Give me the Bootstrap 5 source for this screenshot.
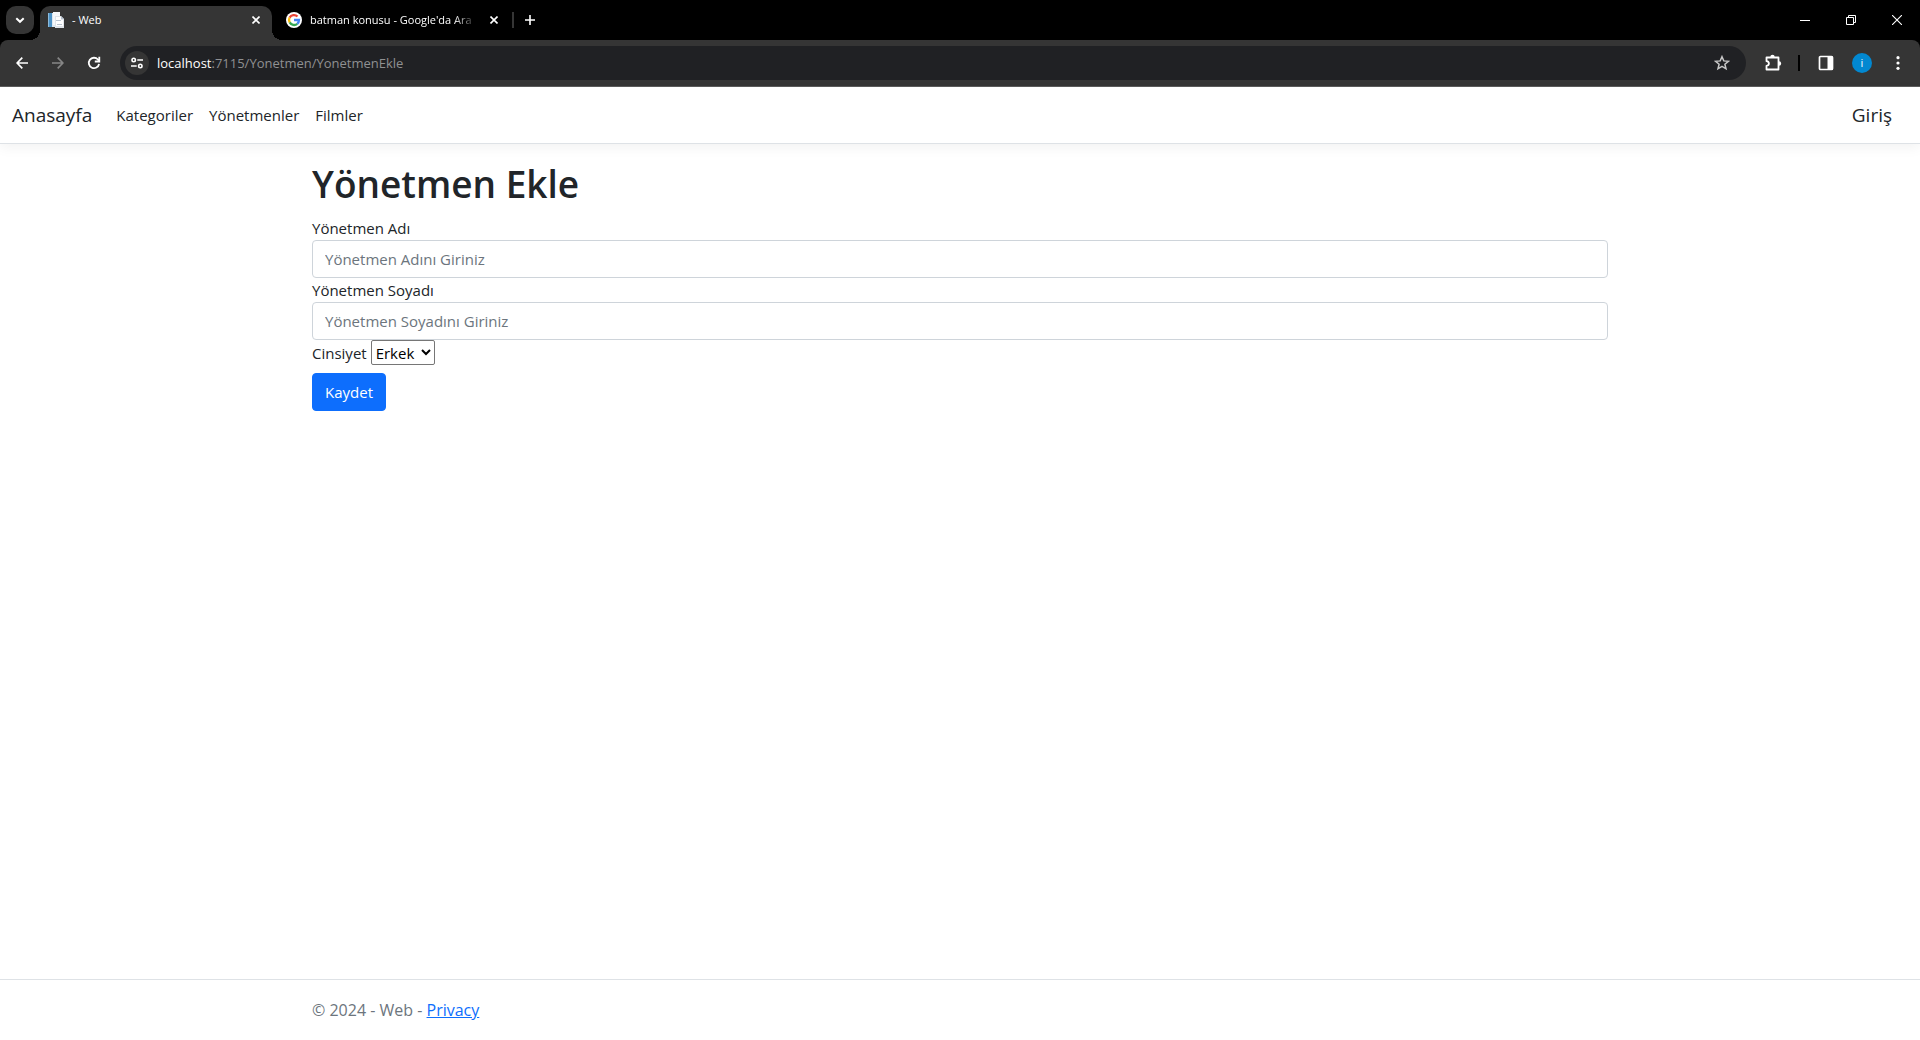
<!DOCTYPE html>
<html lang="tr">
<head>
<meta charset="utf-8">
<meta name="viewport" content="width=device-width, initial-scale=1">
<title>- Web</title>
<link rel="stylesheet" href="https://cdn.jsdelivr.net/npm/bootstrap@5.3.0/dist/css/bootstrap.min.css">
<style>
  body { font-family: "Open Sans", "Noto Sans", sans-serif; font-size: 15px; line-height: 24px; }
  svg { display: block; flex: none; }

  /* Browser window */
  .chrome-btn { background: none; border: 0; padding: 0; color: #fff; display: flex; align-items: center; justify-content: center; flex: none; }
  .tab-strip { height: 40px; background: #000; }
  .tab-search { width: 28px; height: 28px; margin: 6px; border-radius: 10px; background: #353535; }
  .browser-tab { width: 232px; height: 34px; padding: 0 8px 6px; color: #fff; font-size: 11px; position: relative; }
  .browser-tab + .browser-tab { margin-left: 6px; }
  .browser-tab a { color: inherit; text-decoration: none; overflow: hidden; white-space: nowrap; }
  .browser-tab.current { background: #353535; border-radius: 10px 10px 0 0; }
  .browser-tab.current::before, .browser-tab.current::after { content: ""; position: absolute; bottom: 0; width: 10px; height: 10px; }
  .browser-tab.current::before { right: 100%; background: radial-gradient(circle at 0 0, transparent 10px, #353535 10px); }
  .browser-tab.current::after { left: 100%; background: radial-gradient(circle at 100% 0, transparent 10px, #353535 10px); }
  .browser-tab .fade-end { -webkit-mask-image: linear-gradient(to right, #000 85%, transparent); mask-image: linear-gradient(to right, #000 85%, transparent); }
  .tab-close { width: 16px; height: 16px; }
  .tab-rule { width: 2px; height: 16px; margin: 0 2px; background: #353535; }
  .new-tab { width: 28px; height: 28px; }
  .win-btn { width: 46px; height: 40px; }
  .toolbar-wrap { background: #000; }
  .tool-row { height: 47px; padding: 0 4px; background: #353535; border-bottom: 1px solid #5c5c5c; border-radius: 8px 8px 0 0; }
  .tool-btn { width: 36px; height: 34px; }
  .address-bar { height: 34px; border-radius: 17px; background: #202124; padding: 0 6px 0 5px; margin: 0 9px 0 8px; }
  .site-info { width: 24px; height: 24px; border-radius: 50%; background: #353535; }
  .address-text { font-size: 13px; color: #8f9092; white-space: nowrap; }
  .address-text span { color: #fff; }
  .tool-rule { width: 2px; height: 16px; background: #000; margin: 0 8px 0 7px; }
  .avatar-dot { width: 20px; height: 20px; border-radius: 50%; background: #0288d1; font-size: 11px; line-height: 20px; }

  /* Site */
  .site-nav { box-shadow: 0 4px 12px rgba(0,0,0,.05); padding: 8px 0; }
  .site-nav .navbar-brand { font-size: 19px; line-height: 30px; padding: 5px 0; color: #212529; }
  .site-nav .nav-link { color: #212529; }
  .page-title { font-size: 37px; line-height: 48px; font-weight: 600; }
  .form-control, .btn-save { font-size: 15px; line-height: 24px; }
  .form-control { border-color: #ced4da; border-radius: 4px; }
  .form-control::placeholder { color: #6c757d; }
  .btn-save { border-radius: 4px; }
  .plain-select { height: 25px; width: 64px; font-size: 15px; color: #000; background: #fff; border: 1px solid #767676; border-radius: 2px; }
  .site-footer { font-size: 16px; line-height: 60px; }
</style>
</head>
<body class="d-flex flex-column min-vh-100 bg-white">
<header>
  <div class="tab-strip d-flex align-items-start">
    <button class="chrome-btn tab-search" aria-label="Sekmelerde ara"><svg width="12" height="12" viewBox="0 0 12 12" fill="none" stroke="#fff" stroke-width="2"><path d="M2.300 4.200 6 7.800l3.700-3.600"/></svg></button>
    <div class="browser-tab current d-flex align-items-center gap-2 mt-auto">
      <svg width="16" height="16" viewBox="0 0 16 16"><path fill="#dce8f1" d="M0 1h11v14H0z"/><path fill="#4b91c5" d="M1 1h3v14H1z"/><path fill="#8bbadb" d="M0 1h1v14H0z"/><path fill="#f6f8fa" d="M5 0h7v13H5z"/><path fill="#dfe4ea" d="M7 4h6l3 3v9H7z"/><path fill="#fff" d="M8 5h5v3h2v6H8z"/><path fill="#b7c2cf" d="M13 4v3h3zM8 8h5v1H8zM9 12h5v1H9z"/></svg>
      <a href="#" class="flex-grow-1">- Web</a>
      <button class="chrome-btn tab-close" aria-label="Sekmeyi kapat"><svg width="8" height="8" viewBox="0 0 8 8" stroke="#fff" stroke-width="1.600"><path d="m.5.5 7 7m0-7-7 7"/></svg></button>
    </div>
    <div class="browser-tab d-flex align-items-center gap-2 mt-auto">
      <svg width="16" height="16" viewBox="0 0 16 16"><circle cx="8" cy="8" r="8" fill="#fff"/><g fill="none" stroke-width="2.300"><path stroke="#ea4335" d="M3.600 5.600A5 5 0 0 1 11.500 4.500"/><path stroke="#fbbc05" d="M3.700 10.400a5 5 0 0 1-.1-4.800"/><path stroke="#34a853" d="M11.300 11.800a5 5 0 0 1-7.600-1.400"/><path stroke="#4285f4" d="M8 8h5a5 5 0 0 1-1.700 3.800"/></g></svg>
      <a href="#" class="flex-grow-1 fade-end">batman konusu - Google'da Ara</a>
      <button class="chrome-btn tab-close" aria-label="Sekmeyi kapat"><svg width="8" height="8" viewBox="0 0 8 8" stroke="#fff" stroke-width="1.600"><path d="m.5.5 7 7m0-7-7 7"/></svg></button>
    </div>
    <div class="d-flex align-items-center h-100">
      <div class="tab-rule"></div>
      <button class="chrome-btn new-tab" aria-label="Yeni sekme"><svg width="10" height="10" viewBox="0 0 10 10" stroke="#fff" stroke-width="1.600"><path d="M5 0v10M0 5h10"/></svg></button>
    </div>
    <div class="d-flex ms-auto">
      <button class="chrome-btn win-btn" aria-label="Küçült"><svg width="10" height="10" viewBox="0 0 10 10"><path fill="#fff" d="M0 5h10v1H0z"/></svg></button>
      <button class="chrome-btn win-btn" aria-label="Geri yükle"><svg width="10" height="10" viewBox="0 0 10 10" fill="none" stroke="#fff"><path d="M.5 2.500h7v7h-7zM2.500 2.500v-2h7v7h-2"/></svg></button>
      <button class="chrome-btn win-btn" aria-label="Kapat"><svg width="10" height="10" viewBox="0 0 10 10" stroke="#fff" stroke-width="1.100"><path d="m0 0 10 10M10 0 0 10"/></svg></button>
    </div>
  </div>
  <div class="toolbar-wrap">
    <div class="tool-row d-flex align-items-center">
      <button class="chrome-btn tool-btn" aria-label="Geri"><svg width="12" height="12" viewBox="0 0 12 12" fill="none" stroke="#fff" stroke-width="1.700"><path d="M12 6H1.200M6.300.7 1.100 6l5.200 5.300"/></svg></button>
      <button class="chrome-btn tool-btn" aria-label="İleri"><svg width="12" height="12" viewBox="0 0 12 12" fill="none" stroke="#868686" stroke-width="1.700"><path d="M0 6h10.800M5.700.7 10.900 6l-5.200 5.300"/></svg></button>
      <button class="chrome-btn tool-btn" aria-label="Yenile"><svg width="14" height="14" viewBox="0 0 14 14" fill="none" stroke="#fff" stroke-width="1.800"><path d="M12.100 8A5.200 5.200 0 1 1 10.900 3.500L12.500 5"/><path d="M12.300.8v4.700H7.800"/></svg></button>
      <div class="address-bar d-flex align-items-center flex-grow-1">
        <button class="chrome-btn site-info me-2" aria-label="Site bilgileri"><svg width="12" height="12" viewBox="0 0 12 12" fill="none" stroke="#fff" stroke-width="1.600"><circle cx="2.700" cy="3" r="1.700"/><path d="M6.300 3H12M0 9h5.700"/><circle cx="9.300" cy="9" r="1.700"/></svg></button>
        <div class="address-text flex-grow-1"><span>localhost</span>:7115/Yonetmen/YonetmenEkle</div>
        <button class="chrome-btn tool-btn" aria-label="Yer işareti ekle"><svg width="16" height="16" viewBox="0 0 16 16" fill="none" stroke="#c7c7c7" stroke-width="1.500"><path d="m8 1.700 1.800 4.200 4.600.4-3.500 3 1.100 4.500L8 11.400l-4 2.400 1.100-4.500-3.500-3 4.600-.4z"/></svg></button>
      </div>
      <button class="chrome-btn tool-btn" aria-label="Uzantılar"><svg width="18" height="18" viewBox="0 0 18 18"><path fill="none" stroke="#fff" stroke-width="1.800" stroke-linejoin="round" d="M2.500 3.500h12v12h-12v-3.700c3.200-.4 3.200-4.200 0-4.600z"/><path fill="#fff" d="M6.300 3a2.200 2.200 0 0 1 4.400 0zM15 7.300a2.200 2.200 0 0 1 0 4.400z"/></svg></button>
      <div class="tool-rule"></div>
      <button class="chrome-btn tool-btn" aria-label="Yan panel"><svg width="16" height="16" viewBox="0 0 16 16"><rect x="1.500" y="1.500" width="13" height="13" rx="1" fill="none" stroke="#fff" stroke-width="1.700"/><path fill="#fff" d="M9.500 1h5v14h-5z"/></svg></button>
      <button class="chrome-btn tool-btn" aria-label="Profil"><span class="avatar-dot">i</span></button>
      <button class="chrome-btn tool-btn" aria-label="Menü"><svg width="4" height="14" viewBox="0 0 4 14" fill="#fff"><circle cx="2" cy="1.700" r="1.600"/><circle cx="2" cy="7" r="1.600"/><circle cx="2" cy="12.300" r="1.600"/></svg></button>
    </div>
  </div>
  <nav class="navbar navbar-expand site-nav bg-white border-bottom mb-3">
    <div class="container-fluid">
      <a class="navbar-brand me-3" href="#">Anasayfa</a>
      <ul class="navbar-nav flex-grow-1">
        <li class="nav-item"><a class="nav-link" href="#">Kategoriler</a></li>
        <li class="nav-item"><a class="nav-link" href="#">Yönetmenler</a></li>
        <li class="nav-item"><a class="nav-link" href="#">Filmler</a></li>
      </ul>
      <a class="navbar-brand" href="#">Giriş</a>
    </div>
  </nav>
</header>

<main class="container pb-3">
  <h1 class="page-title">Yönetmen Ekle</h1>
  <form>
    <label class="d-block" for="ad">Yönetmen Adı</label>
    <input class="form-control" id="ad" type="text" placeholder="Yönetmen Adını Giriniz">
    <label class="d-block" for="soyad">Yönetmen Soyadı</label>
    <input class="form-control" id="soyad" type="text" placeholder="Yönetmen Soyadını Giriniz">
    <div class="d-flex align-items-center gap-1">
      <label for="cinsiyet">Cinsiyet</label>
      <select class="plain-select" id="cinsiyet"><option>Erkek</option><option>Kadın</option></select>
    </div>
    <button class="btn btn-primary btn-save mt-2" type="button">Kaydet</button>
  </form>
</main>

<footer class="site-footer border-top text-secondary mt-auto">
  <div class="container">© 2024 - Web - <a href="#" class="link-primary">Privacy</a></div>
</footer>
<script src="https://cdn.jsdelivr.net/npm/bootstrap@5.3.0/dist/js/bootstrap.bundle.min.js"></script>
</body>
</html>
